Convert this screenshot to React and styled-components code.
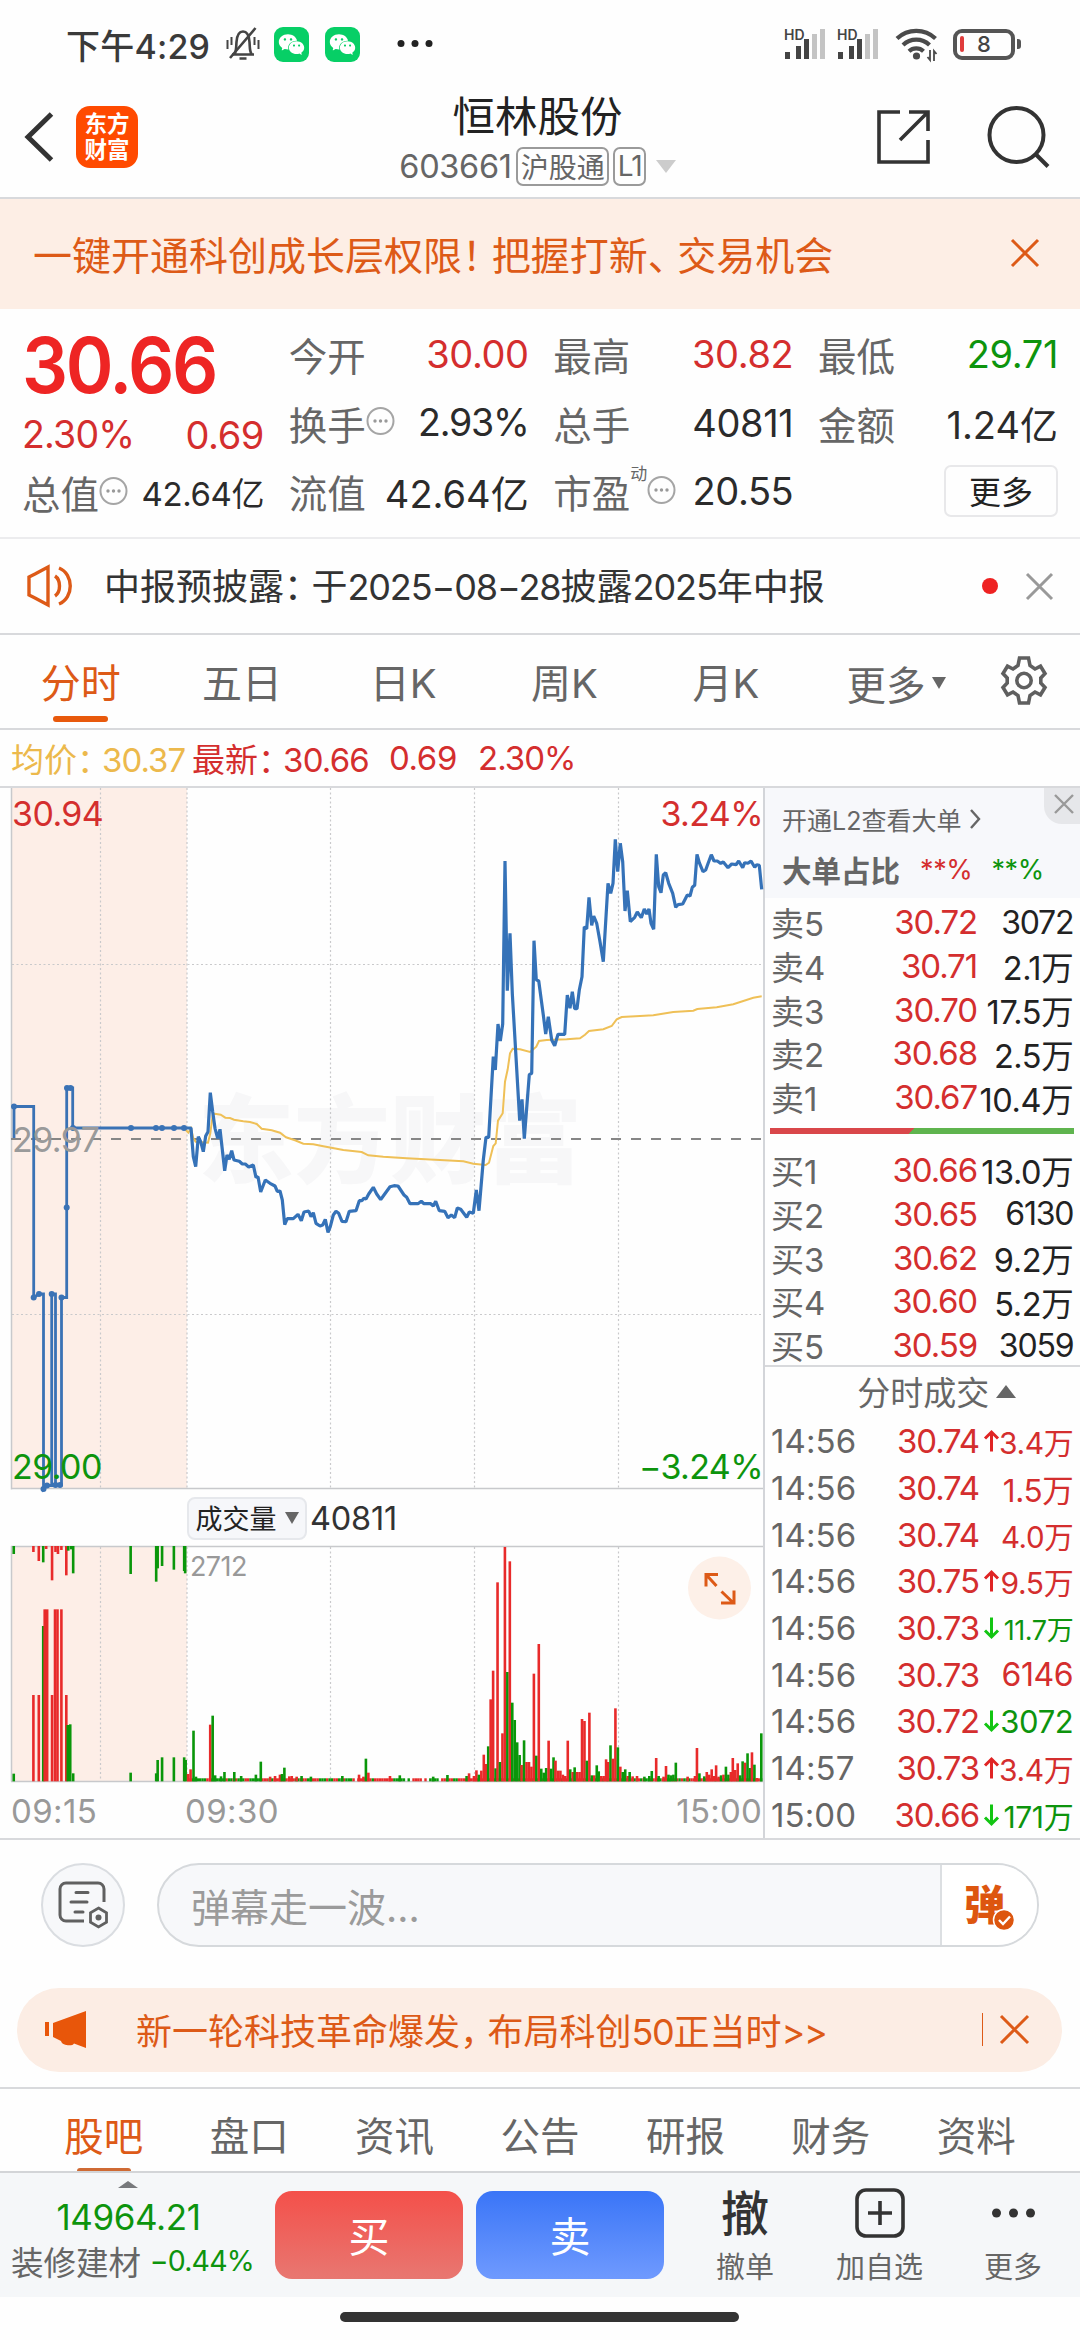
import React from "react";
import styled, { createGlobalStyle } from "styled-components";
import { AiFillWechat } from "react-icons/ai";

const GlobalStyle = createGlobalStyle`
  * { box-sizing: border-box; }
  body {
    margin: 0;
    background: #fefefe;
    color: #333;
    font-family: Inter, "Noto Sans CJK SC", sans-serif;
    -webkit-font-smoothing: antialiased;
  }
  svg { display: block; flex: none; overflow: visible; }
`;

const RED = "#d42e2e";
const GREEN = "#0d940d";
const ORANGE = "#dd5a17";

const Phone = styled.div`
  width: 1080px;
  height: 2340px;
  overflow: hidden;
  display: flex;
  flex-direction: column;
  white-space: nowrap;
`;

const Num = styled.span`
  font-size: ${(p) => p.$size || 38}px;
  font-weight: ${(p) => p.$weight || 400};
  letter-spacing: ${(p) => (p.$ls === undefined ? -0.4 : p.$ls)}px;
  color: ${(p) => p.$color || "#2b2b2b"};
`;

// full width punctuation is set tighter than the rest of the line
const Punct = styled.span`
  font-family: "Noto Sans CJK SC", sans-serif;
  font-feature-settings: "halt";
  margin-right: 0.26em;
`;

/* ---------- status bar ---------- */

const StatusBar = styled.div`
  flex: none;
  height: 78px;
  padding: 10px 59px 0 66px;
  display: flex;
  align-items: center;
`;

const Clock = styled.div`
  width: 160px;
  font-size: 34px;
  font-weight: 500;
  color: #3a3a3a;
  letter-spacing: 0.2px;
`;

const WechatBadge = styled.div`
  width: 35px;
  height: 35px;
  margin-left: ${(p) => p.$gap}px;
  border-radius: 9px;
  background: #07cf66;
  color: #fff;
  display: flex;
  align-items: center;
  justify-content: center;
`;

const StatusRight = styled.div`
  margin-left: auto;
  display: flex;
  align-items: center;
`;

const Battery = styled.div`
  width: 62px;
  height: 31px;
  margin-left: 15px;
  border: 4px solid #555;
  border-radius: 9px;
  display: flex;
  align-items: center;
  padding-left: 3px;
  font-size: 22px;
  font-weight: 500;
  color: #444;
  &::before {
    content: "";
    width: 4px;
    height: 16px;
    border-radius: 2px;
    background: #e03c3c;
    margin-right: 13px;
  }
`;

const Nub = styled.div`
  width: 4px;
  height: 10px;
  margin-left: 2px;
  border-radius: 0 3px 3px 0;
  background: #555;
`;

const BellOff = () => (
  <svg width="34" height="34" viewBox="0 0 34 34" fill="none" stroke="#444" strokeWidth="2.600">
    <path d="M6 27.500h22M8.500 27c2-3 1.500-6 2-12 .5-7 3-10.500 6.500-10.500s6 3.500 6.500 10.500c.5 6 0 9 2 12" />
    <path d="M13.500 31.500h7M29.500 1L4 31" />
    <path d="M1.500 13v9M32.500 13v9M5.500 10v8M28.500 10v8" strokeWidth="2" />
  </svg>
);

const bars = [7, 13, 20, 25, 30];

const Signal = () => (
  <svg width="41" height="34" viewBox="0 0 41 34">
    <text x="-1" y="13" fontSize="14" fontWeight="600" fill="#444">HD</text>
    {bars.map((h, i) => (
      <rect key={i} x={[0, 11, 19, 27, 35][i]} y={32 - h} width="5" height={h} fill={i < 3 ? "#444" : "#c4c4c4"} />
    ))}
  </svg>
);

const Wifi = () => (
  <svg width="43" height="36" viewBox="0 0 43 36" fill="none" stroke="#4a4a4a" strokeWidth="4.200">
    <path d="M2 12.500a28 28 0 0 1 38.500 0M8 19a19 19 0 0 1 26.500 0M14 25.200a10.500 10.500 0 0 1 14.500 0" />
    <circle cx="21.500" cy="30" r="3.600" fill="#4a4a4a" stroke="none" />
    <path d="M35 24v10l-2.500-3M39 35V25l2.500 3" strokeWidth="1.800" />
  </svg>
);

/* ---------- header ---------- */

const Header = styled.div`
  flex: none;
  height: 121px;
  border-bottom: 2px solid #d8d9dc;
  padding: 0 30px 2px 25px;
  display: flex;
  align-items: center;
`;

const HeaderSide = styled.div`
  width: 260px;
  display: flex;
  align-items: center;
  justify-content: ${(p) => (p.$end ? "flex-end" : "flex-start")};
  gap: ${(p) => p.$gap}px;
`;

const Logo = styled.div`
  width: 62px;
  height: 62px;
  border-radius: 14px;
  background: #ff4a00;
  color: #fff;
  display: flex;
  flex-direction: column;
  align-items: center;
  justify-content: center;
  font-size: 22.500px;
  line-height: 26px;
  font-weight: 700;
`;

const HeaderMid = styled.div`
  flex: 1;
  display: flex;
  flex-direction: column;
  align-items: center;
`;

const StockName = styled.div`
  font-size: 42.500px;
  line-height: 60px;
  color: #222;
`;

const CodeRow = styled.div`
  display: flex;
  align-items: center;
  height: 39px;
`;

const Tag = styled.span`
  height: 39px;
  margin-left: 4px;
  padding: 0 2px 2px 3px;
  border: 2px solid #9a9a9a;
  border-radius: 7px;
  display: flex;
  align-items: center;
  font-size: 28px;
  letter-spacing: ${(p) => p.$ls || 0}px;
  color: #666;
`;

const Caret = styled.i`
  width: 0;
  height: 0;
  margin-left: ${(p) => p.$ml || 0}px;
  border: ${(p) => p.$w}px solid transparent;
  border-bottom-width: ${(p) => (p.$up ? p.$h : 0)}px;
  border-top-width: ${(p) => (p.$up ? 0 : p.$h)}px;
  border-${(p) => (p.$up ? "bottom" : "top")}-color: ${(p) => p.$color};
`;

/* ---------- banner ---------- */

const Banner = styled.div`
  flex: none;
  height: 110px;
  padding: 0 41px 2px 33px;
  background: #fdeee5;
  color: ${ORANGE};
  font-size: 39px;
  display: flex;
  align-items: center;
  justify-content: space-between;
`;

const Cross = ({ size, color, width }) => (
  <svg width={size} height={size} viewBox={`0 0 ${size} ${size}`} stroke={color} strokeWidth={width || 3}>
    <path d={`M1 1L${size - 1} ${size - 1}M${size - 1} 1L1 ${size - 1}`} />
  </svg>
);

/* ---------- quote ---------- */

const Quote = styled.div`
  flex: none;
  height: 230px;
  padding: 11px 22px 0 22px;
  border-bottom: 2px solid #ececee;
  display: flex;
  justify-content: space-between;
`;

const QuoteCol = styled.div`
  width: ${(p) => p.$w || 240}px;
  display: flex;
  flex-direction: column;
`;

const QuoteRow = styled.div`
  height: ${(p) => p.$h || 68.5}px;
  display: flex;
  align-items: center;
  color: #666;
  font-size: 38.500px;
  ${Num}:last-child { margin-left: auto; }
`;

const BigPrice = styled.div`
  font-size: 77.500px;
  font-weight: 600;
  letter-spacing: -2.5px;
  color: #ee2524;
  transform: scaleX(0.935);
  transform-origin: 0 50%;
`;

const Sup = styled.span`
  align-self: flex-start;
  margin-top: 3px;
  font-size: 17px;
`;

const MoreButton = styled.div`
  width: 114px;
  height: 52px;
  margin-left: auto;
  border: 2px solid #e8e8ea;
  border-radius: 7px;
  display: flex;
  align-items: center;
  justify-content: center;
  padding-bottom: 2px;
  font-size: 32px;
  color: #222;
`;

const Hint = () => (
  <svg width="29" height="29" viewBox="0 0 29 29" fill="none" stroke="#a5a5a5" strokeWidth="2">
    <circle cx="14.500" cy="13" r="13" />
    <g fill="#999" stroke="none">
      <circle cx="9" cy="13" r="1.700" />
      <circle cx="14.500" cy="13" r="1.700" />
      <circle cx="20" cy="13" r="1.700" />
    </g>
  </svg>
);

/* ---------- notice ---------- */

const Notice = styled.div`
  flex: none;
  height: 96px;
  padding: 0 27px;
  border-bottom: 2px solid #d8d9dc;
  display: flex;
  align-items: center;
  font-size: 36px;
  color: #333;
`;

const NoticeText = styled.div`
  flex: 1;
  margin: 0 0 4px 31px;
`;

const RedDot = styled.i`
  width: 16px;
  height: 16px;
  margin-right: 28px;
  border-radius: 50%;
  background: #ee2222;
`;

/* ---------- period tabs ---------- */

const Tabs = styled.div`
  flex: none;
  height: 95px;
  border-bottom: 2px solid #d8d9dc;
  display: flex;
  align-items: stretch;
`;

const Tab = styled.div`
  width: 161.300px;
  display: flex;
  flex-direction: column;
  align-items: center;
  justify-content: flex-end;
  font-size: 40px;
  color: ${(p) => (p.$on ? ORANGE : "#666")};
  line-height: 60px;
  &::after {
    content: "";
    width: 55px;
    height: 6px;
    margin: 2px 0 6px;
    border-radius: 3px;
    background: ${(p) => (p.$on ? "#e8590c" : "transparent")};
  }
`;

const TabMore = styled.div`
  flex: 1;
  padding: 2px 33px 0 40px;
  display: flex;
  align-items: center;
  font-size: 39.500px;
  color: #666;
  svg { margin: 0 0 4px auto; }
`;

const Gear = () => (
  <svg width="46" height="49" viewBox="0 0 46 49" fill="none" stroke="#5f5f5f" strokeWidth="3.600">
    <path d="M18.500 2h9l1.500 7.500 5 3.500 5.500-2.800 4.500 7.300-4.200 4.500v5l4.200 4.500-4.500 7.300-5.500-2.800-5 3.500-1.500 7.500h-9l-1.500-7.500-5-3.500-5.500 2.800-4.500-7.300 4.200-4.500v-5l-4.200-4.500 4.500-7.300 5.500 2.800 5-3.500z" />
    <circle cx="23" cy="24.500" r="7.200" />
  </svg>
);

const Legend = styled.div`
  flex: none;
  height: 58px;
  padding: 0 0 0 11px;
  border-bottom: 2px solid #d8d9dc;
  display: flex;
  align-items: center;
  font-size: 33px;
`;

const LegendItem = styled.span`
  width: ${(p) => p.$w}px;
  color: ${(p) => p.$color || RED};
`;

/* ---------- charts ---------- */

const Board = styled.div`
  flex: none;
  height: 1052px;
  border-bottom: 2px solid #d8d9dc;
  display: flex;
`;

const Charts = styled.div`
  width: 765px;
  border-right: 2px solid #d3d5d9;
  display: flex;
  flex-direction: column;
`;

const VolumeHead = styled.div`
  height: 57px;
  padding: 1px 0 0 187px;
  display: flex;
  align-items: center;
`;

const VolumePick = styled.div`
  width: 120px;
  height: 43px;
  margin-right: 3px;
  padding-bottom: 1px;
  border: 2px solid #e6e8ec;
  border-radius: 8px;
  background: #f6f7fa;
  display: flex;
  align-items: center;
  justify-content: center;
  gap: 8px;
  font-size: 27px;
  color: #222;
`;

const TimeAxis = styled.div`
  flex: 1;
  padding: 2px 1px 0 11px;
  display: flex;
  align-items: center;
  height: 56px;
  ${Num}:first-child { width: 174px; }
  ${Num}:last-child { margin-left: auto; }
`;

const auction = "14,1138 14,1106.5 33.7,1106.5 33.7,1297.5 39,1294 43.5,1294 43.5,1489 47,1485.5 51.7,1485.5 51.7,1294 55.5,1294 55.5,1485 61.5,1485 61.5,1297.5 66.7,1297.5 66.7,1088 72.7,1088 72.7,1128 186,1128";
const auctionDots = [
  [14, 1106.5], [33.7, 1297.5], [39, 1294], [43.5, 1489], [47, 1485.5], [51.7, 1294], [55.5, 1485], [60, 1485],
  [61.5, 1297.5], [66.7, 1207.5], [67, 1088], [70.5, 1088], [73, 1128], [131, 1128], [156, 1128], [162, 1128], [174, 1128], [184, 1128],
];

// thirds of a pixel, first half of the day starts at 180/1000, second at 440/780
const morning = [
  12,384, 33,384, 40,470, 47,500, 55,410, 62,425, 70,455, 77,408, 84,395, 91,278, 98,335, 105,385, 113,415, 120,388, 134,512,
  141,465, 148,478, 155,452, 162,480, 178,484, 187,492, 196,492, 206,501, 220,495, 228,532, 234,530, 242,576, 256,540, 270,550,
  285,558, 292,574, 300,573, 307,600, 314,674, 322,656, 340,656, 354,643, 364,662, 372,636, 386,633, 393,650, 400,638, 408,670,
  420,678, 428,675, 436,658, 444,697, 451,680, 460,645, 468,634, 476,640, 486,664, 498,665, 508,634, 528,632, 538,602, 546,602,
  551,595, 558,597, 566,582, 580,562, 590,582, 602,599, 612,585, 630,560, 642,557, 654,558, 672,585, 680,592, 690,611, 714,611,
  724,604, 732,611, 752,611, 760,618, 767,604, 778,632, 794,634, 804,653, 814,645, 824,653, 832,624, 842,628, 860,652, 868,636,
  880,640,
];
const afternoon = [
  109,1230, 117,1292, 130,1140, 138,1072, 146,1072, 160,830, 166,870, 174,732, 181,783, 188,732, 195,243, 202,632, 210,460,
  217,640, 239,1022, 246,958, 253,1076, 268,884, 275,880, 282,482, 289,600, 296,602, 310,705, 317,762, 325,710, 335,780, 344,797,
  354,763, 374,763, 382,645, 390,685, 397,635, 404,686, 411,686, 418,630, 426,590, 433,440, 440,447, 447,352, 455,436, 461,408,
  470,430, 480,485, 490,545, 504,310, 512,340, 519,310, 526,178, 533,275, 541,190, 548,245, 555,393, 562,332, 571,425, 584,412,
  592,396, 604,413, 613,387, 620,402, 627,387, 633,430, 641,448, 649,223, 656,320, 663,338, 670,285, 677,278, 686,310, 698,340,
  707,382, 714,374, 728,372, 742,345, 750,348, 757,322, 764,316, 771,223, 778,248, 789,275, 797,270, 805,248, 814,224, 822,243,
  832,243, 842,250, 850,246, 864,263, 875,252, 888,254, 896,243, 908,263, 914,248, 924,250, 933,243, 944,262, 950,254, 958,256,
  965,328,
];
const avgMorning = [
  12,384, 25,398, 33,385, 40,415, 47,425, 84,428, 91,400, 98,345, 105,341, 122,344, 136,353, 150,354, 162,359, 190,364, 210,366,
  230,372, 245,386, 275,391, 300,398, 318,412, 345,421, 370,431, 400,433, 430,439, 490,450, 545,456, 565,466, 610,470, 680,475,
];
const avgAfternoon = [
  0,1140, 70,1144, 100,1151, 137,1155, 147,1148, 160,1098, 167,1090, 174,1022, 188,1000, 195,905, 203,868, 210,820, 218,806,
  240,808, 270,816, 280,808, 289,800, 297,783, 320,780, 380,778, 420,775, 435,764, 447,753, 490,748, 515,738, 530,718, 545,711,
  600,708, 640,706, 700,696, 760,692, 772,687, 830,682, 880,673, 940,653, 965,649,
];

const toPoints = (list, x0, y0) => {
  const out = [];
  for (let i = 0; i < list.length; i += 2) {
    out.push(`${(x0 + list[i] / 3).toFixed(1)},${(y0 + list[i + 1] / 3).toFixed(1)}`);
  }
  return out.join(" ");
};

const pricePoints = `${toPoints(morning, 180, 1000)} ${toPoints(afternoon, 440, 780)}`;
const avgPoints = `${toPoints(avgMorning, 180, 1000)} ${toPoints(avgAfternoon, 440, 780)}`;

const PriceChart = () => (
  <svg width="763" height="701" viewBox="0 788 763 701">
    <rect x="11" y="788" width="176" height="701" fill="#fdeee7" />
    <text x="198" y="1175" fontSize="96" fontWeight="900" fill="#f7f7f8">东方财富</text>
    <g stroke="#c9c9cb" strokeWidth="1.200" strokeDasharray="2 2.500">
      {[100.5, 187, 330.5, 474.5, 618.5].map((x) => <path key={x} d={`M${x} 788V1489`} />)}
      <path d="M12 964.500H763M12 1314.500H763" />
    </g>
    <path d="M11.500 788V1489.500M11 1488.500H763" stroke="#c8c9cc" strokeWidth="1.500" fill="none" />
    <path d="M11 1139H763" stroke="#868686" strokeWidth="2" strokeDasharray="10 10" />
    <polyline points={avgPoints} fill="none" stroke="#efc057" strokeWidth="2" />
    <polyline points={auction} fill="none" stroke="#3a72b5" strokeWidth="2.800" />
    <polyline points={pricePoints} fill="none" stroke="#3572b8" strokeWidth="3.200" strokeLinejoin="bevel" />
    {auctionDots.map(([x, y], i) => <circle key={i} cx={x} cy={y} r="3" fill="#3a72b5" />)}
    <g fontSize="34" letterSpacing="-0.6">
      <text x="12" y="826" fill={RED}>30.94</text>
      <text x="763" y="826" fill={RED} textAnchor="end">3.24%</text>
      <text x="12" y="1152" fill="#9a9a9a">29.97</text>
      <text x="12" y="1479" fill={GREEN}>29.00</text>
      <text x="763" y="1479" fill={GREEN} textAnchor="end">−3.24%</text>
    </g>
  </svg>
);

// [x, top, colour] of each minute
const topBars = [
  [28,222,"g"],[68,216,"r"],[79,243,"r"],[88,247,"g"],[94,207,"r"],[106,301,"r"],[113,216,"r"],[118,222,"r"],[125,210,"r"],
  [135,286,"r"],[139,212,"g"],[145,208,"g"],[149,280,"g"],[266,282,"g"],[318,305,"g"],[321,265,"g"],[330,258,"g"],[354,269,"g"],
  [375,273,"g"],[377,280,"g"],
];
const lowBars = [
  [28,881,"g"],[68,645,"r"],[79,645,"r"],[88,438,"g"],[91,388,"r"],[96,388,"r"],[106,645,"r"],[112,388,"r"],[117,388,"r"],
  [125,388,"r"],[135,645,"r"],[138,735,"g"],[143,733,"g"],[149,880,"g"],[266,878,"g"],[318,880,"g"],[321,840,"g"],[330,832,"g"],
  [354,832,"g"],[375,832,"g"],[378,840,"g"],
  [383,882,"r"],[388,868,"r"],[394,752,"g"],[399,890,"g"],[428,734,"r"],[433,707,"g"],[438,886,"g"],[450,889,"g"],[457,876,"g"],
  [477,876,"g"],[491,888,"g"],[521,884,"g"],[531,845,"g"],[550,890,"r"],[560,888,"r"],[570,884,"r"],[574,882,"g"],[579,863,"g"],
  [589,889,"r"],[594,888,"r"],[604,890,"r"],[614,888,"g"],[633,890,"g"],[697,888,"g"],[731,884,"r"],[740,890,"r"],[745,836,"g"],
  [750,878,"r"],[794,888,"r"],[814,886,"g"],[882,890,"g"],[911,885,"g"],[950,888,"g"],[955,880,"r"],[965,888,"r"],[970,871,"r"],
  [975,884,"g"],[980,872,"r"],[985,824,"r"],[990,852,"r"],[994,799,"g"],[999,658,"r"],[1004,572,"r"],[1009,865,"g"],
  [1013,307,"r"],[1018,846,"g"],[1023,760,"r"],[1028,201,"r"],[1033,576,"g"],[1038,244,"r"],[1043,668,"g"],[1048,720,"g"],
  [1053,787,"g"],[1058,825,"g"],[1062,855,"r"],[1067,781,"g"],[1072,846,"r"],[1077,846,"r"],[1082,860,"r"],[1087,581,"r"],
  [1092,827,"g"],[1097,492,"r"],[1102,866,"g"],[1107,878,"g"],[1112,864,"g"],[1117,782,"r"],[1122,866,"g"],[1127,832,"g"],
  [1131,842,"r"],[1136,872,"r"],[1141,872,"r"],[1146,884,"r"],[1151,888,"r"],[1156,782,"r"],[1161,868,"g"],[1166,876,"r"],
  [1170,862,"g"],[1175,876,"r"],[1180,876,"r"],[1185,717,"r"],[1190,723,"r"],[1195,842,"g"],[1200,698,"r"],[1205,886,"g"],
  [1210,886,"r"],[1215,856,"g"],[1219,874,"g"],[1224,888,"r"],[1229,888,"r"],[1234,838,"r"],[1238,846,"r"],[1243,796,"g"],
  [1248,836,"r"],[1253,685,"r"],[1258,802,"g"],[1263,860,"r"],[1268,876,"g"],[1273,868,"g"],[1278,888,"r"],[1282,876,"g"],
  [1288,889,"r"],[1297,888,"r"],[1312,890,"g"],[1322,888,"g"],[1327,873,"g"],[1336,834,"r"],[1341,888,"g"],[1351,890,"r"],
  [1356,858,"r"],[1361,884,"g"],[1366,886,"g"],[1371,884,"g"],[1376,848,"g"],[1400,890,"r"],[1415,888,"r"],[1419,804,"r"],
  [1424,880,"g"],[1434,889,"g"],[1439,876,"r"],[1444,884,"r"],[1449,868,"r"],[1454,888,"r"],[1458,856,"r"],[1463,890,"r"],
  [1468,886,"g"],[1473,884,"r"],[1478,860,"g"],[1483,884,"g"],[1488,876,"r"],[1492,834,"r"],[1497,870,"r"],[1502,850,"r"],
  [1507,886,"g"],[1512,844,"g"],[1517,848,"r"],[1522,820,"g"],[1527,864,"g"],[1531,817,"r"],[1536,854,"g"],[1541,894,"r"],
  [1550,760,"g"],
];
// quiet minutes, one letter each, a dot is a minute without a trade
const quiet =
  "rrggggggrrggggggrggrrgggrrgggggrrrggrrrrrrrrrggrrrggrrrgggrggrrggrgggr.rrrrrrgrrrrrrrrggggg.g.rrrr.r.gggg.rrgrrggrrrrrrr" +
  "rgrrgrgrggrgrrrgrgrgggrrgrggrgrrgrgrgrrggrgrrgrrrrggrgrgrrgrrggrrrggrgrggrrrggrgggrrrgrgggrrrrrrgrrrgrrggrrrrggrrrrrgrrg";
const fill = { r: "#e82a2a", g: "#0a960a" };

const VolumeChart = () => (
  <svg width="763" height="235" viewBox="0 1546 763 235">
    <rect x="11" y="1546" width="176" height="235" fill="#fdeee7" />
    <g stroke="#c9c9cb" strokeWidth="1.200" strokeDasharray="2 2.500">
      {[100.5, 187, 330.5, 474.5, 618.5].map((x) => <path key={x} d={`M${x} 1547V1781`} />)}
    </g>
    <path d="M11.500 1546V1781.500M11 1546.500H763M11 1781.500H763" stroke="#c8c9cc" strokeWidth="1.500" fill="none" />
    {quiet.split("").map((c, i) =>
      c === "." ? null : <rect key={i} x={187 + i * 2.397} y="1778.300" width="2.400" height="3" fill={fill[c]} />
    )}
    {topBars.map(([x, y, c], i) => (
      <rect key={i} x={x / 2.036 - 1.3} y="1546" width="2.600" height={(y - 198) / 3} fill={fill[c]} />
    ))}
    {lowBars.map(([x, y, c], i) => (
      <rect key={i} x={x / 2.036 - 1.3} y={1480 + y / 3} width="2.600" height={(904 - y) / 3} fill={fill[c]} />
    ))}
    <text x="190" y="1576" fontSize="27" letterSpacing="-0.6" fill="#999">2712</text>
    <circle cx="719.500" cy="1588" r="31.500" fill="#fdf0e8" />
    <path
      d="M706 1586.500V1574.500H718M706.500 1575L716.500 1586M721.500 1591.500L733.500 1603M734 1590.500V1603H721"
      fill="none"
      stroke={ORANGE}
      strokeWidth="3"
    />
  </svg>
);

/* ---------- order book ---------- */

const Book = styled.div`
  flex: 1;
  display: flex;
  flex-direction: column;
  > * { flex: none; }
`;

const Level2 = styled.div`
  position: relative;
  height: 110px;
  padding: 11px 0 0 17px;
  background: #f7f8fb;
  color: #666;
`;

const Level2Link = styled.div`
  height: 40px;
  display: flex;
  align-items: center;
  gap: 9px;
  font-size: 25px;
`;

const Level2Ratio = styled.div`
  height: 60px;
  display: flex;
  align-items: center;
  font-size: 29.500px;
  font-weight: 600;
  ${Num}:nth-child(2) { margin-left: 20px; }
  ${Num}:nth-child(3) { margin-left: 19px; }
`;

const Level2Close = styled.div`
  position: absolute;
  top: 0;
  right: 0;
  width: 36px;
  height: 36px;
  padding: 0 0 5px 4px;
  border-bottom-left-radius: 18px;
  background: #e6e7ea;
  display: flex;
  align-items: center;
  justify-content: center;
`;

const OrderRow = styled.div`
  height: 43.800px;
  padding: 0 7px 0 6px;
  display: grid;
  grid-template-columns: 90px 116px 1fr;
  align-items: center;
  font-size: 33px;
  color: #666;
  ${Num} { text-align: right; }
`;

const RatioBar = styled.div`
  height: 6px;
  margin: 11px 6px 12px 5px;
  background: linear-gradient(135deg, #d9474a 0 102px, #5fb44e 102.500px);
`;

const TradesHead = styled.div`
  height: 53px;
  padding: 0 64px 2px 0;
  border-top: 2px solid #d8d9dc;
  display: flex;
  align-items: center;
  justify-content: flex-end;
  font-size: 33px;
  color: #666;
`;

const TradeRow = styled.div`
  height: 46.700px;
  padding: 0 7px 0 6px;
  display: grid;
  grid-template-columns: 100px 108px 20px 1fr;
  align-items: center;
  justify-items: end;
  ${Num}:first-child { justify-self: start; }
`;

const Arrow = ({ dir }) =>
  dir ? (
    <svg width="15" height="22" viewBox="0 0 15 22" fill="none" stroke={dir === "up" ? "#e02424" : "#12c512"} strokeWidth="3">
      <path d={dir === "up" ? "M7.500 21.500V2M1 8.500L7.500 2l6.500 6.500" : "M7.500 .5V20M1 13.500L7.500 20l6.500-6.500"} />
    </svg>
  ) : (
    <span />
  );

const sells = [
  ["卖5", "30.72", "3072"],
  ["卖4", "30.71", "2.1万"],
  ["卖3", "30.70", "17.5万"],
  ["卖2", "30.68", "2.5万"],
  ["卖1", "30.67", "10.4万"],
];
const buys = [
  ["买1", "30.66", "13.0万"],
  ["买2", "30.65", "6130"],
  ["买3", "30.62", "9.2万"],
  ["买4", "30.60", "5.2万"],
  ["买5", "30.59", "3059"],
];
const trades = [
  ["14:56", "30.74", "up", "3.4万", RED, 30],
  ["14:56", "30.74", null, "1.5万", RED, 31.5],
  ["14:56", "30.74", null, "4.0万", RED, 29.5],
  ["14:56", "30.75", "up", "9.5万", RED, 30],
  ["14:56", "30.73", "down", "11.7万", GREEN, 27],
  ["14:56", "30.73", null, "6146", RED, 32],
  ["14:56", "30.72", "down", "3072", GREEN, 31],
  ["14:57", "30.73", "up", "3.4万", RED, 30],
  ["15:00", "30.66", "down", "171万", GREEN, 30],
];

const Orders = ({ list }) =>
  list.map(([name, price, vol]) => (
    <OrderRow key={name}>
      <span>{name}</span>
      <Num $size={33} $ls={-1.1} $color={RED}>{price}</Num>
      <Num $size={vol.includes("万") ? 32.5 : 32} $ls={vol.includes("万") ? -0.4 : -1.2} $color="#222">{vol}</Num>
    </OrderRow>
  ));

/* ---------- comment line and promo ---------- */

const Danmu = styled.div`
  flex: none;
  height: 148px;
  padding: 23px 41px 0;
  display: flex;
  gap: 32px;
`;

const RoundButton = styled.div`
  width: 84px;
  height: 84px;
  border: 2px solid #dadde1;
  border-radius: 50%;
  background: #f7f8fa;
  display: flex;
  align-items: center;
  justify-content: center;
`;

const Field = styled.div`
  flex: 1;
  height: 84px;
  border: 2px solid #d6d9dc;
  border-radius: 42px;
  overflow: hidden;
  background: #f7f8fa;
  display: flex;
  align-items: center;
  padding-left: 32px;
  font-size: 39px;
  color: #9b9b9b;
`;

const DanmuSwitch = styled.div`
  position: relative;
  width: 97px;
  height: 82px;
  margin-left: auto;
  padding: 0 0 7px 22px;
  border-left: 2px solid #dcdfe2;
  background: #fff;
  display: flex;
  align-items: center;
  font-size: 41px;
  font-weight: 900;
  color: #dd560f;
  svg { position: absolute; left: 51px; top: 45px; }
`;

const Promo = styled.div`
  flex: none;
  height: 84px;
  margin: 0 18px 15px 17px;
  padding: 0 33px 2px 28px;
  border-radius: 42px;
  background: #fcede4;
  display: flex;
  align-items: center;
  font-size: 36px;
  color: ${ORANGE};
`;

const PromoText = styled.div`
  flex: 1;
  margin-left: 49px;
`;

const PromoBar = styled.i`
  width: 1px;
  height: 33px;
  margin-right: 17px;
  background: ${ORANGE};
`;

/* ---------- bottom ---------- */

const Sections = styled.div`
  flex: none;
  height: 86px;
  padding: 0 31px;
  border-top: 2px solid #d8d9dc;
  border-bottom: 2px solid #d3d5d8;
  display: flex;
`;

const Section = styled.div`
  flex: 1;
  padding-top: 19px;
  display: flex;
  flex-direction: column;
  align-items: center;
  justify-content: space-between;
  font-size: 39.500px;
  line-height: 58px;
  color: ${(p) => (p.$on ? ORANGE : "#666")};
  &::after {
    content: "";
    width: 54px;
    height: 3px;
    border-radius: 3px 3px 0 0;
    background: ${(p) => (p.$on ? "#cf6a34" : "transparent")};
  }
`;

const Dock = styled.div`
  flex: none;
  height: 124px;
  background: #f5f7f9;
  display: flex;
`;

const IndexBox = styled.div`
  width: 275px;
  padding: 8px 21px 0 11px;
  display: flex;
  flex-direction: column;
  align-items: center;
`;

const IndexValue = styled.div`
  height: 58px;
  padding-right: 8px;
  display: flex;
  align-items: center;
`;

const IndexName = styled.div`
  width: 100%;
  height: 29px;
  display: flex;
  align-items: center;
  justify-content: space-between;
  font-size: 32.500px;
  color: #666;
`;

const Trade = styled.div`
  width: 188px;
  height: 88px;
  margin: 18px 13px 0 0;
  border-radius: 17px;
  background: linear-gradient(${(p) => p.$from}, ${(p) => p.$to});
  display: flex;
  align-items: center;
  justify-content: center;
  padding-bottom: 2px;
  font-size: 41px;
  color: #fff;
`;

const Action = styled.div`
  width: ${(p) => p.$w}px;
  display: flex;
  flex-direction: column;
  align-items: center;
  font-size: 29px;
  line-height: 39px;
  color: #666;
`;

const ActionIcon = styled.div`
  height: 75px;
  padding-top: 5px;
  display: flex;
  align-items: center;
  font-size: 48px;
  font-weight: 500;
  color: #333;
`;

const HomeBar = styled.div`
  flex: none;
  width: 399px;
  height: 10px;
  margin: 15px 0 0 340px;
  border-radius: 5px;
  background: #333;
`;

export default function App() {
  return (
    <>
      <GlobalStyle />
      <Phone>
        <StatusBar>
          <Clock>下午4:29</Clock>
          <BellOff />
          <WechatBadge $gap={14}><AiFillWechat size={29} /></WechatBadge>
          <WechatBadge $gap={16}><AiFillWechat size={29} /></WechatBadge>
          <svg width="80" height="8" viewBox="0 0 80 8" fill="#222">
            <circle cx="41" cy="3.500" r="3.500" />
            <circle cx="55" cy="3.500" r="3.500" />
            <circle cx="69" cy="3.500" r="3.500" />
          </svg>
          <StatusRight>
            <Signal />
            <svg width="12" height="1" />
            <Signal />
            <svg width="16" height="1" />
            <Wifi />
            <Battery>8</Battery>
            <Nub />
          </StatusRight>
        </StatusBar>

        <Header>
          <HeaderSide $gap={23}>
            <svg width="28" height="50" viewBox="0 0 28 50" fill="none" stroke="#333" strokeWidth="5">
              <path d="M26.500 2L3 25l23.500 23" />
            </svg>
            <Logo>
              <span>东方</span>
              <span>财富</span>
            </Logo>
          </HeaderSide>
          <HeaderMid>
            <StockName>恒林股份</StockName>
            <CodeRow>
              <Num $size={32.5} $ls={-0.3} $color="#666">603661</Num>
              <Tag>沪股通</Tag>
              <Tag $ls={-1}>L1</Tag>
              <Caret $w={10} $h={13} $ml={10} $color="#ccc" />
            </CodeRow>
          </HeaderMid>
          <HeaderSide $end $gap={58}>
            <svg width="53" height="54" viewBox="0 0 53 54" fill="none" stroke="#333" strokeWidth="3.600">
              <path d="M23 2H2v50h49V30M32 2h19v19M50 3L23 30" />
            </svg>
            <svg width="62" height="62" viewBox="0 0 62 62" fill="none" stroke="#333" strokeWidth="4">
              <circle cx="28.500" cy="29" r="27" />
              <path d="M47.500 48L60 60.500" />
            </svg>
          </HeaderSide>
        </Header>

        <Banner>
          <div>
            一键开通科创成长层权限<Punct>！</Punct>把握打新<Punct>、</Punct>交易机会
          </div>
          <Cross size={28} color={ORANGE} />
        </Banner>

        <Quote>
          <QuoteCol $w={242}>
            <QuoteRow $h={90}>
              <BigPrice>30.66</BigPrice>
            </QuoteRow>
            <QuoteRow $h={49}>
              <Num $color={RED} $ls={-0.8} $size={37.5}>2.30%</Num>
              <Num $color={RED}>0.69</Num>
            </QuoteRow>
            <QuoteRow $h={66}>总值<Hint /><Num $size={33}>42.64亿</Num></QuoteRow>
          </QuoteCol>
          <QuoteCol>
            <QuoteRow>今开<Num $color={RED}>30.00</Num></QuoteRow>
            <QuoteRow>换手<Hint /><Num $size={37.5} $ls={-1.2}>2.93%</Num></QuoteRow>
            <QuoteRow>流值<Num $ls={0}>42.64亿</Num></QuoteRow>
          </QuoteCol>
          <QuoteCol>
            <QuoteRow>最高<Num $color={RED}>30.82</Num></QuoteRow>
            <QuoteRow>总手<Num>40811</Num></QuoteRow>
            <QuoteRow>市盈<Sup>动</Sup><Hint /><Num>20.55</Num></QuoteRow>
          </QuoteCol>
          <QuoteCol>
            <QuoteRow>最低<Num $color={GREEN}>29.71</Num></QuoteRow>
            <QuoteRow>金额<Num $ls={0}>1.24亿</Num></QuoteRow>
            <QuoteRow><MoreButton>更多</MoreButton></QuoteRow>
          </QuoteCol>
        </Quote>

        <Notice>
          <svg width="46" height="40" viewBox="0 0 46 40" fill="none" stroke={ORANGE} strokeWidth="3.400">
            <path d="M2 11v18l6 3 13 7V1L8 8zM28 10c6 4 6 16 0 20M32 2c15 6 15 30 0 36" />
          </svg>
          <NoticeText>
            中报预披露<Punct>：</Punct>于<Num $size={36} $ls={-1.1} $color="#333">2025−08−28</Num>披露<Num $size={36} $ls={-1.1} $color="#333">2025</Num>年中报
          </NoticeText>
          <RedDot />
          <Cross size={27} color="#999" />
        </Notice>

        <Tabs>
          <Tab $on>分时</Tab>
          <Tab>五日</Tab>
          <Tab>日K</Tab>
          <Tab>周K</Tab>
          <Tab>月K</Tab>
          <TabMore>
            更多
            <Caret $w={7.5} $h={12} $ml={7} $color="#666" />
            <Gear />
          </TabMore>
        </Tabs>

        <Legend>
          <LegendItem $w={181} $color="#ecb94c">均价<Punct>：</Punct><Num $size={33} $ls={-1} $color="inherit">30.37</Num></LegendItem>
          <LegendItem $w={197}>最新<Punct>：</Punct><Num $size={33} $ls={-0.8} $color={RED}>30.66</Num></LegendItem>
          <LegendItem $w={89}><Num $size={33} $color={RED}>0.69</Num></LegendItem>
          <LegendItem><Num $size={33} $ls={-1} $color={RED}>2.30%</Num></LegendItem>
        </Legend>

        <Board>
          <Charts>
            <PriceChart />
            <VolumeHead>
              <VolumePick>
                成交量
                <Caret $w={7} $h={12} $color="#666" />
              </VolumePick>
              <Num $size={32.5} $ls={-0.2} $color="#333">40811</Num>
            </VolumeHead>
            <VolumeChart />
            <TimeAxis>
              <Num $size={33} $ls={0.4} $color="#999">09:15</Num>
              <Num $size={33} $ls={0.4} $color="#999">09:30</Num>
              <Num $size={33} $ls={0.2} $color="#999">15:00</Num>
            </TimeAxis>
          </Charts>
          <Book>
            <Level2>
              <Level2Link>
                开通L2查看大单
                <svg width="10" height="20" viewBox="0 0 10 20" fill="none" stroke="#666" strokeWidth="2.400">
                  <path d="M1 1l8 9-8 9" />
                </svg>
              </Level2Link>
              <Level2Ratio>
                <span>大单占比</span>
                <Num $size={27} $color={RED}>**%</Num>
                <Num $size={27} $color={GREEN}>**%</Num>
              </Level2Ratio>
              <Level2Close><Cross size={20} color="#999" width={2.4} /></Level2Close>
            </Level2>
            <Orders list={sells} />
            <RatioBar />
            <Orders list={buys} />
            <TradesHead>
              分时成交
              <Caret $up $w={10} $h={13} $ml={7} $color="#666" />
            </TradesHead>
            {trades.map(([time, price, dir, vol, color, size], i) => (
              <TradeRow key={i}>
                <Num $size={33} $ls={0.1} $color="#666">{time}</Num>
                <Num $size={33} $ls={-1.1} $color={RED}>{price}</Num>
                <Arrow dir={dir} />
                <Num $size={size} $color={color}>{vol}</Num>
              </TradeRow>
            ))}
          </Book>
        </Board>

        <Danmu>
          <RoundButton>
            <svg width="50" height="48" viewBox="0 0 50 48" fill="none" stroke="#606060" strokeWidth="3">
              <path d="M26 40H8a6 6 0 0 1-6-6V8a6 6 0 0 1 6-6h32a6 6 0 0 1 6 6v13" />
              <path d="M18 11.500h12M13 21h16M17 31h8" strokeLinecap="round" />
              <path d="M40.500 27l8 4.700v9.600l-8 4.700-8-4.700v-9.600z" strokeWidth="2.800" />
              <circle cx="40.500" cy="36.500" r="3" fill="#606060" stroke="none" />
            </svg>
          </RoundButton>
          <Field>
            弹幕走一波…
            <DanmuSwitch>
              弹
              <svg width="22" height="22" viewBox="0 0 22 22">
                <circle cx="11" cy="11" r="10.500" fill="#dd560f" stroke="#fff" strokeWidth="1.500" />
                <path d="M6 11l4 4 7-7.500" fill="none" stroke="#fff" strokeWidth="2.400" />
              </svg>
            </DanmuSwitch>
          </Field>
        </Danmu>

        <Promo>
          <svg width="42" height="37" viewBox="0 0 42 37" fill="#e8560a">
            <path d="M0 11h4v14H0zM8 12L41 0v37l-12-4.500c-1 3-12 2.500-13-2.500L8 26z" />
          </svg>
          <PromoText>
            新一轮科技革命爆发<Punct>，</Punct>布局科创<Num $size={36} $ls={-1.3} $color={ORANGE}>50</Num>正当时<Num $size={36} $ls={-1.3} $color={ORANGE}>&gt;&gt;</Num>
          </PromoText>
          <PromoBar />
          <Cross size={29} color={ORANGE} />
        </Promo>

        <Sections>
          <Section $on>股吧</Section>
          <Section>盘口</Section>
          <Section>资讯</Section>
          <Section>公告</Section>
          <Section>研报</Section>
          <Section>财务</Section>
          <Section>资料</Section>
        </Sections>

        <Dock>
          <IndexBox>
            <Caret $up $w={10} $h={7} $ml={-10} $color="#77797c" />
            <IndexValue><Num $size={35} $color={GREEN}>14964.21</Num></IndexValue>
            <IndexName>装修建材<Num $size={28.5} $ls={-0.8} $color={GREEN}>−0.44%</Num></IndexName>
          </IndexBox>
          <Trade $from="#f4504a" $to="#e87771">买</Trade>
          <Trade $from="#3a75f7" $to="#6f9afe">卖</Trade>
          <Action $w={136}>
            <ActionIcon>撤</ActionIcon>
            撤单
          </Action>
          <Action $w={133}>
            <ActionIcon>
              <svg width="50" height="50" viewBox="0 0 50 50" fill="none" stroke="#333" strokeWidth="3.600">
                <rect x="2" y="2" width="46" height="46" rx="9" />
                <path d="M13 25h24M25 13v24" />
              </svg>
            </ActionIcon>
            加自选
          </Action>
          <Action $w={134}>
            <ActionIcon>
              <svg width="43" height="10" viewBox="0 0 43 10" fill="#333">
                <circle cx="4.500" cy="5" r="4.500" />
                <circle cx="21.500" cy="5" r="4.500" />
                <circle cx="38.500" cy="5" r="4.500" />
              </svg>
            </ActionIcon>
            更多
          </Action>
        </Dock>
        <HomeBar />
      </Phone>
    </>
  );
}
